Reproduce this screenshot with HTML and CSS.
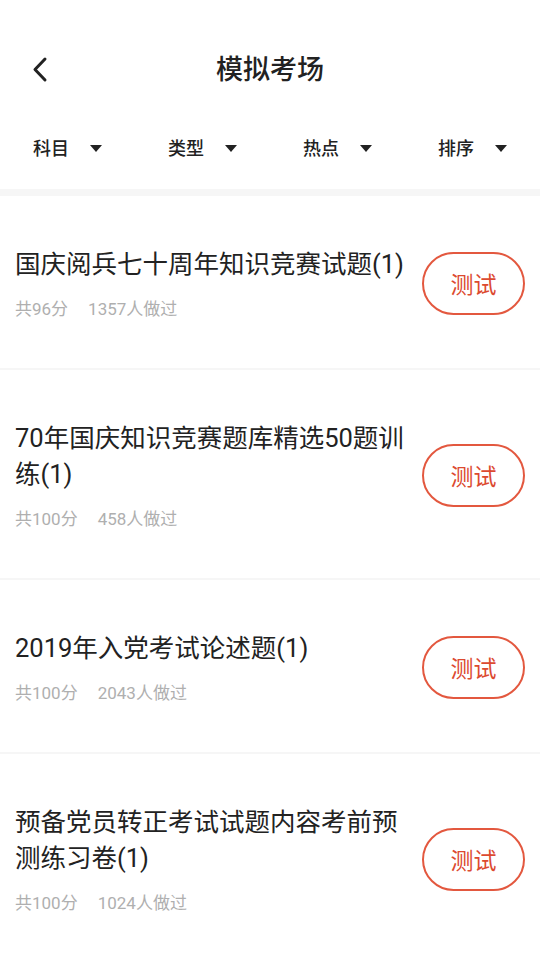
FILE: index.html
```html
<!DOCTYPE html>
<html lang="zh-CN">
<head>
    <meta charset="UTF-8">
    <meta name="viewport" content="width=device-width, initial-scale=1.0">
    <title>模拟考场</title>
    <link rel="stylesheet" href="styles.css">
</head>
<body>
    <div class="header">
        <span class="back">
            <svg width="20" height="28" viewBox="0 0 20 28">
                <polyline points="13,3 3,13.5 13,24" fill="none" stroke="#222" stroke-width="3" stroke-linecap="round" stroke-linejoin="round"/>
            </svg>
        </span>
        <h1>模拟考场</h1>
    </div>

    <div class="filters">
        <div class="filter">科目 <span class="arrow"></span></div>
        <div class="filter">类型 <span class="arrow"></span></div>
        <div class="filter">热点 <span class="arrow"></span></div>
        <div class="filter">排序 <span class="arrow"></span></div>
    </div>

    <div class="list">
        <div class="item">
            <div class="info">
                <p class="name">国庆阅兵七十周年知识竞赛试题(1)</p>
                <p class="meta"><span>共96分</span><span>1357人做过</span></p>
            </div>
            <button class="test">测试</button>
        </div>
        <div class="item">
            <div class="info">
                <p class="name">70年国庆知识竞赛题库精选50题训练(1)</p>
                <p class="meta"><span>共100分</span><span>458人做过</span></p>
            </div>
            <button class="test">测试</button>
        </div>
        <div class="item">
            <div class="info">
                <p class="name">2019年入党考试论述题(1)</p>
                <p class="meta"><span>共100分</span><span>2043人做过</span></p>
            </div>
            <button class="test">测试</button>
        </div>
        <div class="item">
            <div class="info">
                <p class="name">预备党员转正考试试题内容考前预测练习卷(1)</p>
                <p class="meta"><span>共100分</span><span>1024人做过</span></p>
            </div>
            <button class="test">测试</button>
        </div>
    </div>
</body>
</html>
```

FILE: styles.css
```css
/* 模拟考场 */
body {
    font-family: Roboto, "Noto Sans CJK SC", sans-serif;
    background-color: #fff;
    color: #222;
    margin: 0;
    padding: 0;
    width: 540px;
    overflow: hidden;
}

.header {
    position: relative;
    height: 60px;
    padding-top: 40px;
    display: flex;
    justify-content: center;
    align-items: center;
}

.back {
    position: absolute;
    left: 32px;
    top: 56px;
    width: 20px;
    height: 28px;
}

h1 {
    margin: 0;
    font-size: 27px;
    font-weight: 500;
    line-height: 36px;
    color: #222;
}

.filters {
    display: flex;
    padding: 31px 0 22px;
    border-bottom: 7px solid #f6f6f6;
}

.filter {
    flex: 1;
    display: flex;
    justify-content: center;
    align-items: center;
    gap: 21px;
    font-size: 18px;
    line-height: 36px;
    font-weight: 500;
    color: #222;
}

.arrow {
    width: 0;
    height: 0;
    border-left: 6px solid transparent;
    border-right: 6px solid transparent;
    border-top: 7px solid #222;
    margin-top: -2px;
}

.item {
    display: flex;
    align-items: center;
    gap: 10px;
    padding: 50px 15px 48px;
    border-bottom: 2px solid #f6f6f6;
}

.info {
    flex: 1;
}

.name {
    margin: 0;
    font-size: 25.5px;
    line-height: 36px;
    color: #222;
}

.meta {
    margin: 16px 0 0;
    font-size: 17px;
    line-height: 22px;
    color: #afafaf;
    display: flex;
    gap: 20px;
}

.test {
    flex: none;
    width: 103px;
    height: 63px;
    border: 2px solid #e3583f;
    border-radius: 32px;
    background-color: #fff;
    color: #dc4a30;
    font-family: inherit;
    font-size: 23px;
    padding: 0;
    cursor: pointer;
}
```
